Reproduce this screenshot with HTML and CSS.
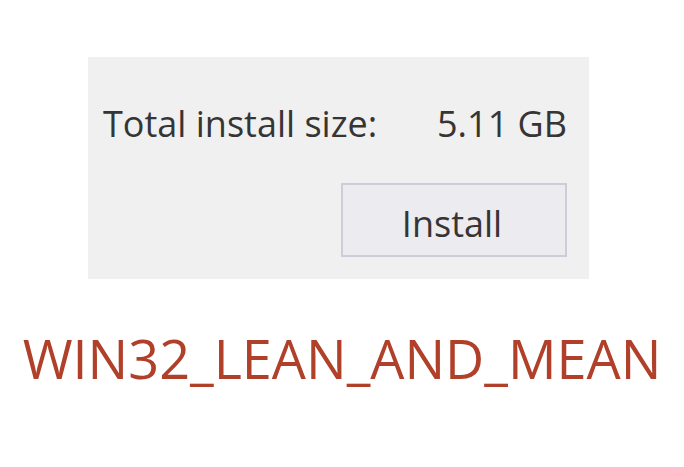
FILE: index.html
```html
<!DOCTYPE html>
<html>
<head>
<meta charset="utf-8">
<link rel="stylesheet" href="styles.css">
</head>
<body>
<div class="panel">
  <div class="row">
    <span class="label">Total install size:</span>
    <span class="value">5.11 GB</span>
  </div>
  <div class="actions">
    <button class="btn">Install</button>
  </div>
</div>
<div class="caption">WIN32_LEAN_AND_MEAN</div>
</body>
</html>
```

FILE: styles.css
```css
html, body {
  margin: 0;
  padding: 0;
  background: #ffffff;
}
body {
  font-family: "Open Sans", "Noto Sans", sans-serif;
}
.panel {
  margin: 57px 0 0 88px;
  width: 501px;
  height: 222px;
  box-sizing: border-box;
  background: #f0f0f0;
  padding: 47px 22px 0 15px;
  display: flex;
  flex-direction: column;
}
.row {
  display: flex;
  justify-content: space-between;
  font-size: 36px;
  line-height: 40px;
  color: #353535;
}
.actions {
  display: flex;
  justify-content: flex-end;
  margin-top: 39px;
}
.btn {
  width: 226px;
  height: 74px;
  box-sizing: border-box;
  border: 2px solid #cdcdd9;
  background: #ebebf0;
  font-family: "Open Sans", "Noto Sans", sans-serif;
  font-size: 36px;
  line-height: 40px;
  color: #353535;
  padding: 8px 4px 0 0;
  margin: 0;
}
.caption {
  margin-top: 49px;
  text-align: center;
  font-size: 54px;
  line-height: 60px;
  color: #b0402a;
}
```
